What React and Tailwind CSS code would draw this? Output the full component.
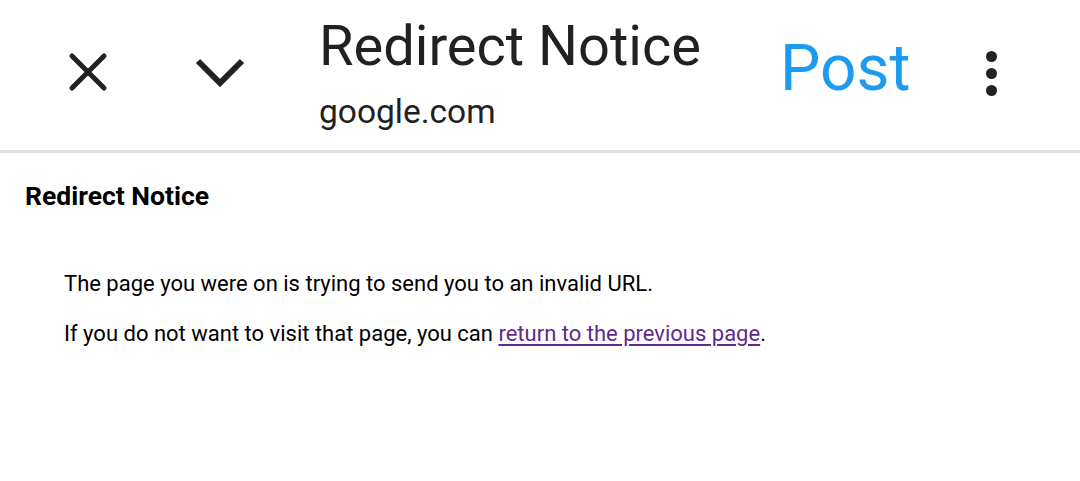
import React from 'react';

const CloseIcon = () => (
  <svg width="40" height="40" viewBox="0 0 40 40" className="text-[#222]">
    <path d="M4 4 L36 36 M36 4 L4 36" stroke="currentColor" strokeWidth="5" strokeLinecap="round" fill="none" />
  </svg>
);

const ChevronIcon = () => (
  <svg width="50" height="32" viewBox="0 0 50 32" className="text-[#222]">
    <polyline points="3,5 25,27 47,5" stroke="currentColor" strokeWidth="6" fill="none" />
  </svg>
);

const App = () => {
  return (
    <div className="w-[1080px] h-[481px] bg-white overflow-hidden font-['Roboto','Liberation_Sans',sans-serif]">
      <header className="flex items-start h-[153px] border-b-[3px] border-[#dde2e6]">
        <div className="ml-[68px] mt-[52px]">
          <CloseIcon />
        </div>
        <div className="ml-[87px] mt-[56px]">
          <ChevronIcon />
        </div>
        <div className="ml-[74px] w-[461px] pt-[13px]">
          <div className="text-[56px] leading-[66px] text-[#212121]">Redirect Notice</div>
          <div className="mt-[13px] text-[33.5px] leading-[40px] text-[#212121]">google.com</div>
        </div>
        <div className="w-[136px] pt-[30px] text-[64px] leading-[77px] text-[#1d9bf0]">Post</div>
        <div className="ml-[70px] mt-[51px] flex flex-col gap-[6px]">
          <span className="block w-[11px] h-[11px] rounded-full bg-[#222]" />
          <span className="block w-[11px] h-[11px] rounded-full bg-[#222]" />
          <span className="block w-[11px] h-[11px] rounded-full bg-[#222]" />
        </div>
      </header>
      <main className="pl-[24px] pt-[28px]">
        <h2 className="ml-[1px] text-[26.5px] leading-[30px] font-bold text-black">Redirect Notice</h2>
        <div className="mt-[58px] pl-[40px] flex flex-col gap-[20px] text-[22px] leading-[30px] text-black">
          <p>The page you were on is trying to send you to an invalid URL.</p>
          <p>
            If you do not want to visit that page, you can{' '}
            <a href="#" className="text-[#5f2a8c] underline underline-offset-[3px]">return to the previous page</a>.
          </p>
        </div>
      </main>
    </div>
  );
};

export default App;
